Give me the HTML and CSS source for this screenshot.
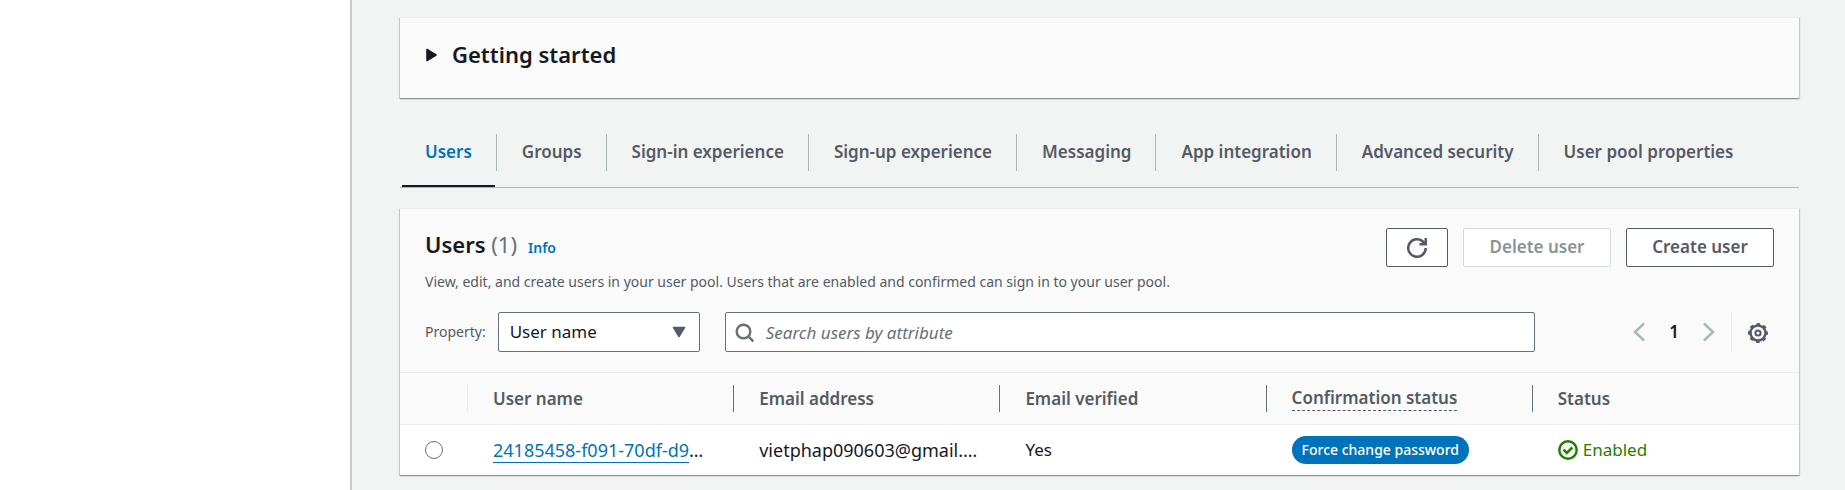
FILE: index.html
```html
<!DOCTYPE html>
<html lang="en">
<head>
<meta charset="utf-8">
<title>User pool</title>
<link rel="stylesheet" href="styles.css">
</head>
<body>
<div class="app">
  <aside class="sidebar"></aside>
  <main class="content">
    <section class="panel getting-started">
      <button class="expander" type="button" aria-expanded="false">
        <svg class="expander-icon" width="11" height="14" viewBox="0 0 11 14" aria-hidden="true"><path d="M1 1.5v11L10 7z" fill="currentColor" stroke="currentColor" stroke-width="1.6" stroke-linejoin="round"/></svg>
        Getting started
      </button>
    </section>

    <nav class="tabs" role="tablist">
      <button class="tab active" type="button" role="tab" aria-selected="true"><span class="tab-label">Users</span></button>
      <button class="tab" type="button" role="tab"><span class="tab-label">Groups</span></button>
      <button class="tab" type="button" role="tab"><span class="tab-label">Sign-in experience</span></button>
      <button class="tab" type="button" role="tab"><span class="tab-label">Sign-up experience</span></button>
      <button class="tab" type="button" role="tab"><span class="tab-label">Messaging</span></button>
      <button class="tab" type="button" role="tab"><span class="tab-label">App integration</span></button>
      <button class="tab" type="button" role="tab"><span class="tab-label">Advanced security</span></button>
      <button class="tab" type="button" role="tab"><span class="tab-label">User pool properties</span></button>
    </nav>

    <section class="panel">
      <header class="panel-header">
        <div class="heading">
          <div class="title-row">
            <h2 class="title">Users <span class="count">(1)</span></h2>
            <a class="info" href="#">Info</a>
          </div>
          <p class="description">View, edit, and create users in your user pool. Users that are enabled and confirmed can sign in to your user pool.</p>
        </div>
        <div class="actions">
          <button class="btn btn-icon" type="button" aria-label="Refresh">
            <svg width="20" height="20" viewBox="0 0 16 16" fill="none" stroke="currentColor" stroke-width="2" aria-hidden="true"><path d="M15 8a7 7 0 1 1-2.1-5L15 5"/><path d="M15 0v5h-5"/></svg>
          </button>
          <button class="btn" type="button" disabled>Delete user</button>
          <button class="btn" type="button">Create user</button>
        </div>
      </header>

      <div class="toolbar">
        <label class="property-label" for="property">Property:</label>
        <div class="select-wrap">
          <select class="select" id="property"><option>User name</option></select>
          <svg class="select-arrow" width="14" height="12" viewBox="0 0 14 12" aria-hidden="true"><path d="M1.500 1.500h11L7 10.500z" fill="currentColor" stroke="currentColor" stroke-width="1.500" stroke-linejoin="round"/></svg>
        </div>
        <div class="search-wrap">
          <svg class="search-icon" width="20" height="20" viewBox="0 0 20 20" fill="none" stroke="currentColor" stroke-width="2.500" aria-hidden="true"><circle cx="8.500" cy="8.500" r="6.800"/><path d="M13.300 13.300l5 5"/></svg>
          <input class="search" type="text" placeholder="Search users by attribute" aria-label="Search users by attribute">
        </div>
        <div class="pagination">
          <button class="plain" type="button" aria-label="Previous page"><svg width="12" height="20" viewBox="0 0 12 20" fill="none" stroke="currentColor" stroke-width="2.500"><path d="M11 1.500L2 10l9 8.500"/></svg></button>
          <button class="plain page" type="button">1</button>
          <button class="plain" type="button" aria-label="Next page"><svg width="12" height="20" viewBox="0 0 12 20" fill="none" stroke="currentColor" stroke-width="2.500"><path d="M1 1.500L10 10l-9 8.500"/></svg></button>
        </div>
        <div class="preferences">
          <button class="plain" type="button" aria-label="Preferences"><svg width="20" height="20" viewBox="0 0 20 20" fill="none" stroke="currentColor" stroke-linejoin="round"><circle cx="10" cy="10" r="7.500" stroke-width="2.500"/><circle cx="10" cy="10" r="9" stroke-width="2" stroke-dasharray="3.600 3.469" stroke-dashoffset="1.800"/><circle cx="10" cy="10" r="2.600" stroke-width="2"/></svg></button>
        </div>
      </div>

      <table class="table">
        <colgroup><col class="col-select"><col><col><col><col><col></colgroup>
        <thead>
          <tr>
            <th class="select-head" aria-label="Selection"></th>
            <th scope="col">User name</th>
            <th scope="col">Email address</th>
            <th scope="col">Email verified</th>
            <th scope="col"><span class="hinted">Confirmation status</span></th>
            <th scope="col">Status</th>
          </tr>
        </thead>
        <tbody>
          <tr>
            <td class="select-cell"><input class="radio" type="radio" name="user" aria-label="Select user"></td>
            <td class="identity"><a class="user-link" href="#">24185458-f091-70df-d9</a>…</td>
            <td class="identity">vietphap090603@gmail.…</td>
            <td>Yes</td>
            <td><span class="badge">Force change password</span></td>
            <td><span class="status"><svg width="20" height="20" viewBox="0 0 20 20" fill="none" stroke="currentColor" stroke-width="2.500" aria-hidden="true"><circle cx="10" cy="10" r="8.700"/><path d="M5.500 9.700l3.300 3.300 5.500-5.500"/></svg>Enabled</span></td>
          </tr>
        </tbody>
      </table>
    </section>
  </main>
</div>
</body>
</html>
```
FILE: styles.css
```css
* { box-sizing: border-box; }

body {
  margin: 0;
  background: #f2f3f3;
  color: #16191f;
  font-family: "Noto Sans", "Open Sans", sans-serif;
  font-size: 17px;
  line-height: 24px;
}

button, input, select { font: inherit; color: inherit; }
button { cursor: pointer; }
svg { display: block; }

.app { display: flex; min-height: 100vh; }
.sidebar {
  flex: 0 0 352px;
  background: #fff;
  border-right: 2px solid #c6cbcb;
}
.content {
  flex: 1;
  min-width: 0;
  padding: 17px 46px 12px 48px;
}

.panel {
  background: #fafafa;
  border-top: 1px solid #eaeded;
  box-shadow: 0 1px 0 0 #879596, 0 1px 1px 0 rgba(0, 28, 36, 0.3), 1px 1px 1px 0 rgba(0, 28, 36, 0.15), -1px 1px 1px 0 rgba(0, 28, 36, 0.15);
}
.getting-started { padding: 22px 26px 29px; }
.expander {
  display: flex;
  align-items: center;
  gap: 15px;
  padding: 0;
  border: 0;
  background: none;
  font-size: 22px;
  font-weight: 600;
  line-height: 29px;
}

.tabs {
  display: flex;
  margin: 36px 0 20px;
  border-bottom: 1px solid #aab7b8;
}
.tab {
  position: relative;
  padding: 0 0 16px;
  border: 0;
  background: none;
  color: #545b64;
  font-weight: 600;
}
.tab-label {
  display: block;
  padding: 6px 24px 7px 25px;
  border-right: 1px solid #aab7b8;
}
.tab:last-child .tab-label { border-right: 0; }
.tab.active { color: #0073bb; }
.tab.active::after {
  content: "";
  position: absolute;
  left: 2px;
  right: 2px;
  bottom: 0;
  border-bottom: 2px solid #16191f;
}

.panel-header {
  display: flex;
  justify-content: space-between;
  padding: 19px 25px 0;
}
.title-row { display: flex; align-items: baseline; gap: 11px; }
.title { margin: 0; font-size: 22px; font-weight: 600; line-height: 32px; }
.count { color: #687078; font-weight: 400; }
.info { color: #0073bb; font-size: 14px; font-weight: 600; text-decoration: none; }
.description { margin: 12px 0 0; color: #545b64; font-size: 14px; line-height: 20px; }
.actions { display: flex; gap: 15px; align-items: flex-start; }
.btn {
  min-width: 148px;
  height: 39px;
  padding: 0 24px 2px;
  border: 1px solid #545b64;
  border-radius: 2px;
  background: #fff;
  color: #545b64;
  font-weight: 600;
}
.btn:disabled { border-color: #d5dbdb; color: #879596; }
.btn-icon { min-width: 62px; padding: 0 20px; }

.toolbar {
  display: flex;
  align-items: center;
  padding: 20px 25px;
}
.property-label { color: #545b64; font-size: 14px; margin-right: 12px; }
.select-wrap { position: relative; width: 202px; margin-right: 25px; color: #545b64; }
.select, .search {
  display: block;
  width: 100%;
  height: 40px;
  border: 1px solid #687078;
  border-radius: 2px;
  background: #fff;
  color: #16191f;
}
.select { appearance: none; padding: 0 36px 0 11px; }
.select-arrow { position: absolute; right: 14px; top: 14px; pointer-events: none; }
.search-wrap { position: relative; flex: 1; color: #687078; }
.search { padding: 0 12px 0 40px; }
.search::placeholder { color: #687078; font-style: italic; opacity: 1; }
.search-icon { position: absolute; left: 10px; top: 11px; }
.pagination { display: flex; align-items: center; margin: 0 16px 0 98px; color: #aab7b8; }
.plain { display: block; padding: 0; border: 0; background: none; }
.page { width: 58px; color: #16191f; font-weight: 600; }
.preferences { border-left: 1px solid #eaeded; padding: 10px 6px 9px 16px; color: #545b64; }

.table { width: 100%; table-layout: fixed; border-collapse: collapse; }
.col-select { width: 68px; }
.table th, .table td {
  height: 52px;
  padding: 0 25px;
  overflow: hidden;
  text-align: left;
  white-space: nowrap;
}
.table th {
  position: relative;
  border-top: 1px solid #eaeded;
  border-bottom: 1px solid #eaeded;
  color: #545b64;
  font-weight: 600;
}
.table th:not(:last-child)::after {
  content: "";
  position: absolute;
  right: 0;
  top: 12px;
  bottom: 12px;
  border-right: 1px solid #687078;
}
.table th.select-head::after { border-color: #eaeded; }
.table td { height: 50px; background: #fff; }
.table .identity { font-size: 18px; padding-right: 16px; }
.hinted { display: inline-block; border-bottom: 1px dashed #545b64; }
.radio {
  appearance: none;
  display: block;
  width: 18px;
  height: 18px;
  margin: 0;
  border: 1px solid #687078;
  border-radius: 50%;
  background: #fff;
}
.user-link { color: #0073bb; text-decoration: none; border-bottom: 1px solid #0073bb; }
.badge {
  display: inline-block;
  padding: 0 10px;
  border-radius: 14px;
  background: #0073bb;
  color: #fff;
  font-size: 14px;
  font-weight: 500;
  line-height: 28px;
}
.status { display: flex; align-items: center; gap: 5px; color: #1d8102; }
```
